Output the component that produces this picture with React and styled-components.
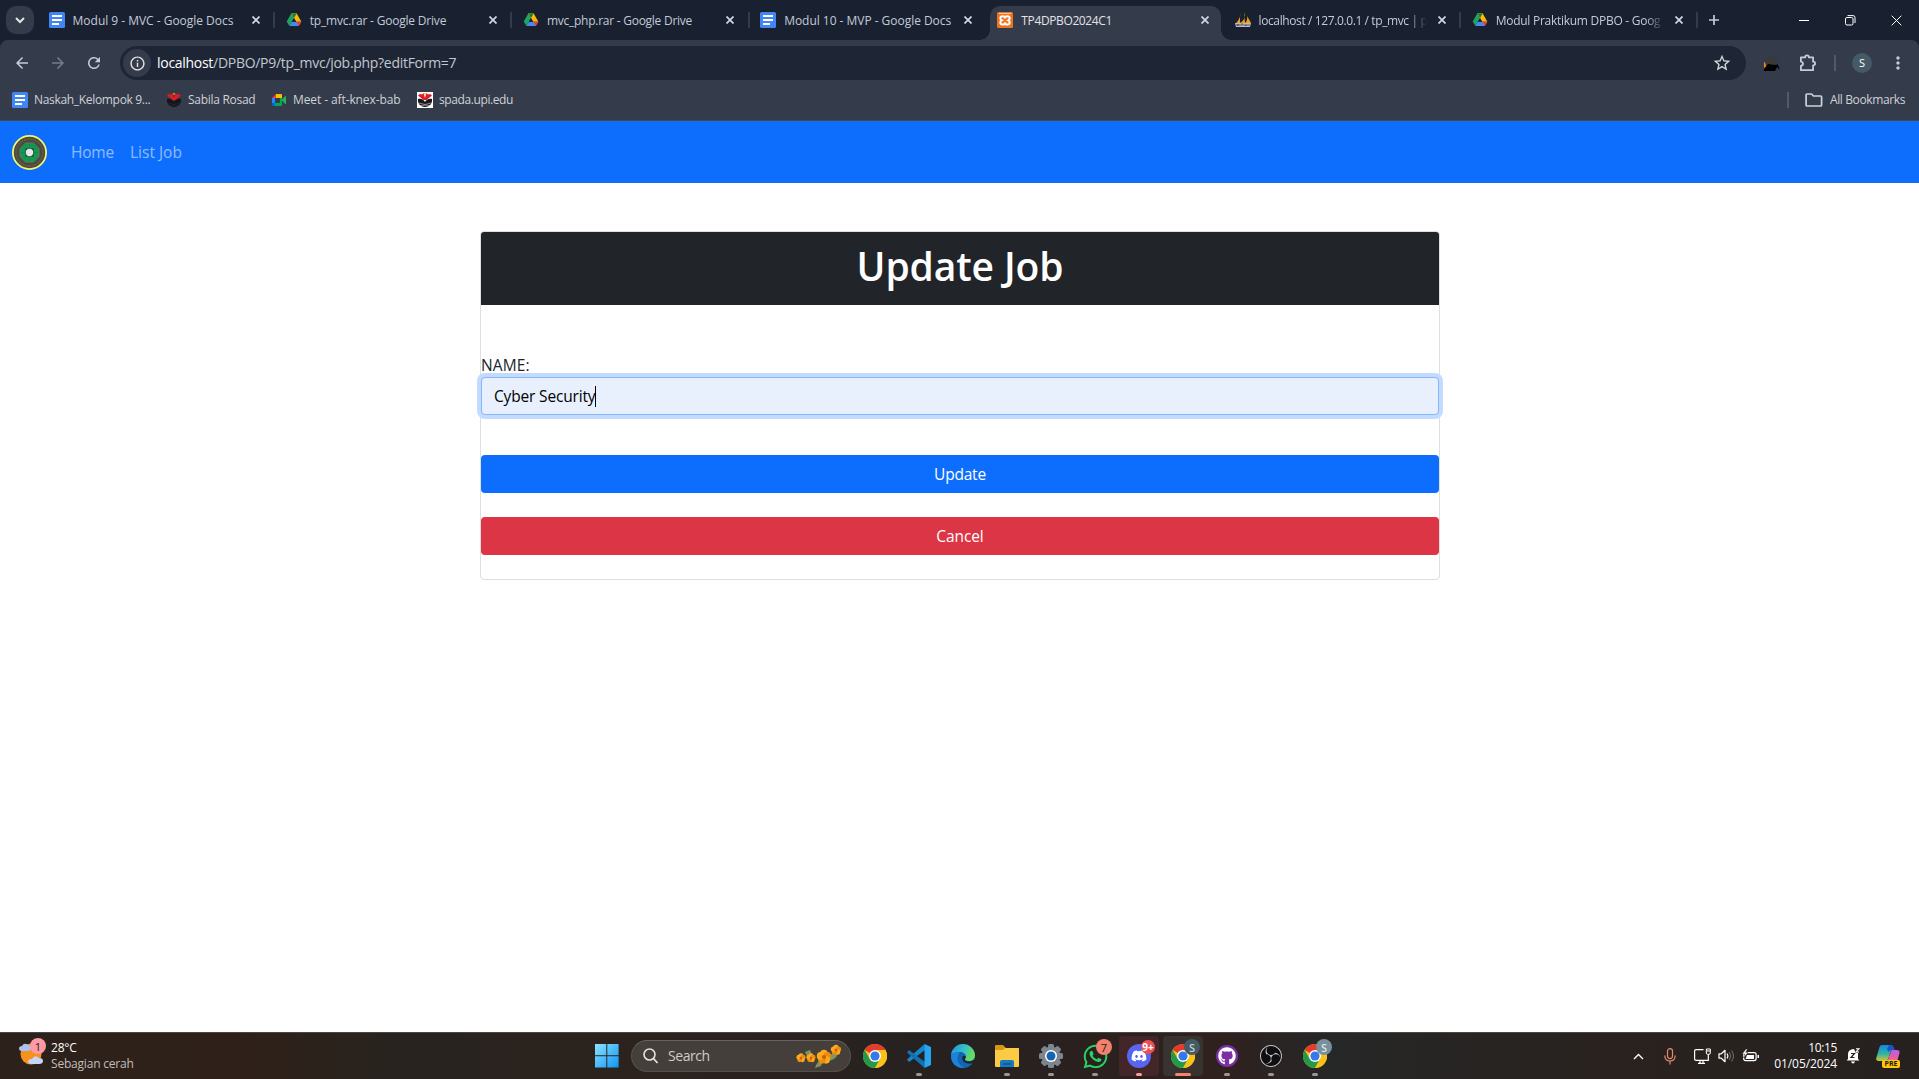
import React from "react";
import styled, { createGlobalStyle, css } from "styled-components";
import { MdArrowBack, MdArrowForward, MdRefresh, MdInfoOutline, MdStarBorder, MdMoreVert } from "react-icons/md";
import { FaWhatsapp, FaDiscord, FaGithub } from "react-icons/fa";
import { SiObsstudio } from "react-icons/si";

const Global = createGlobalStyle`
  *{box-sizing:border-box}
  html,body{margin:0;padding:0;overflow:hidden}
  body{font-family:"Open Sans","Noto Sans",sans-serif;background:#fff;color:#212529}
`;
const Window = styled.div`width:100vw;height:100vh;display:flex;flex-direction:column;overflow:hidden;background:#fff;`;
const Label = styled.span`white-space:nowrap;letter-spacing:${p => p.$ls || 0}px;margin-bottom:${p => (p.$up || 0) * 2}px;`;

/* tab strip */
const TabStrip = styled.header`height:40px;flex:none;display:flex;background:#192130;padding-left:6px;`;
const TabSearch = styled.button`width:28px;height:28px;margin:6px 4px 0 0;flex:none;border:0;border-radius:10px;background:#343c4c;display:grid;place-items:center;padding:0;`;
const Tab = styled.div`
  position:relative;width:237.2px;flex:none;display:flex;align-items:center;padding:2px 0 0 10.6px;height:40px;color:#c3cad9;font-size:12px;
  ${p => p.$sep && css`&::after{content:"";position:absolute;right:0;top:12px;width:2px;height:16px;background:#343c4c;}`}
  ${p => p.$active && css`color:#e3e3e6;z-index:1;
    &::before{content:"";position:absolute;z-index:-1;left:-7px;right:-7px;top:6px;bottom:0;
      background:
       radial-gradient(circle at 0 0,transparent 9.5px,#343c4c 10px) left bottom/10px 10px no-repeat,
       radial-gradient(circle at 10px 0,transparent 9.5px,#343c4c 10px) right bottom/10px 10px no-repeat;}
  `}
`;
const ActiveFill = styled.i`position:absolute;z-index:-1;left:3px;right:3px;top:6px;bottom:0;background:#343c4c;border-radius:10px 10px 0 0;`;
const TabIcon = styled.span`width:16px;height:16px;flex:none;margin:-2px 8px 0 0;display:flex;`;
const TabTitle = styled.span`width:169px;height:20px;line-height:20px;white-space:nowrap;flex:none;
  ${p => p.$fade && css`mask-image:linear-gradient(90deg,#000 150px,transparent 168px);`}`;
const TabClose = styled.span`width:16px;height:16px;display:grid;place-items:center;margin:-2px 0 0 6.4px;`;
const NewTab = styled.span`width:32px;display:grid;place-items:center;`;
const Controls = styled.div`display:flex;margin-left:auto;align-items:center;`;
const Control = styled.span`width:46px;display:grid;place-items:center;`;

/* toolbar */
const ToolbarShell = styled.div`background:#192130;flex:none;`;
const Toolbar = styled.div`height:46px;display:flex;align-items:center;background:#343c4c;border-radius:8px 8px 0 0;color:#c7cbd6;padding:0 3px 0 4px;`;
const ToolButton = styled.span`width:${p => p.$w || 36}px;flex:none;display:grid;place-items:center;font-size:${p => p.$s || 18}px;opacity:${p => p.$dim ? .45 : 1};`;
const Omnibox = styled.div`height:34px;width:1626px;flex:none;border-radius:17px;background:#1e2636;display:flex;align-items:center;padding:0 14px 0 3px;margin-left:8px;font-size:14px;color:#c3c7cf;`;
const InfoChip = styled.span`width:28px;height:28px;border-radius:50%;background:#343c4c;display:grid;place-items:center;color:#e3e3e6;font-size:17px;margin-right:6px;`;
const Host = styled.b`font-weight:400;color:#fff;`;
const StarSlot = styled.span`margin-left:auto;display:flex;font-size:20px;color:#d5d7dd;`;
const Divider = styled.i`width:2px;height:16px;background:#525a6a;flex:none;`;
const Avatar = styled.span`width:20px;height:20px;border-radius:50%;background:#455a64;color:#fff;font-size:11px;display:grid;place-items:center;line-height:20px;`;
const Bookmarks = styled.div`height:35px;flex:none;background:#343c4c;border-bottom:1px solid #4a4746;display:flex;align-items:center;padding:0 14px 6px 12px;font-size:12px;color:#cfd1d6;`;
const Bookmark = styled.span`width:${p => p.$w}px;display:flex;align-items:center;gap:6px;flex:none;`;
const AllBookmarks = styled.span`margin-left:auto;display:flex;align-items:center;`;
const FolderSlot = styled.span`width:41px;padding-left:9px;display:grid;place-items:center;`;

/* page */
const Navbar = styled.nav`height:62px;flex:none;background:#0d6efd;display:flex;align-items:center;padding:1px 0 0 12px;`;
const NavLink = styled.a`color:rgba(255,255,255,.55);font-size:15.5px;margin:0 0 1px ${p => p.$ml}px;line-height:24px;`;
const Page = styled.main`flex:1;padding:48px 479px 0 480px;`;
const Card = styled.section`border:1px solid #dfdfdf;border-radius:4px;height:349px;display:flex;flex-direction:column;`;
const CardHead = styled.h1`margin:0;height:73px;flex:none;background:#212529;color:#fff;border-radius:3px 3px 0 0;font-size:39px;font-weight:600;line-height:67px;text-align:center;`;
const FieldLabel = styled.label`margin-top:48px;height:24px;line-height:24px;font-size:15.5px;`;
const Field = styled.div`height:38px;border:1px solid #86b7fe;border-radius:4px;background:#e8f0fe;box-shadow:0 0 0 4px #c3dbff;display:flex;align-items:center;padding:0 12px;font-size:15.5px;color:#000;flex:none;`;
const Caret = styled.i`width:1px;height:21px;background:#000;`;
const Button = styled.button`height:38px;flex:none;border:0;border-radius:4px;background:${p => p.$bg};margin-top:${p => p.$mt}px;color:#fff;font:400 15.5px "Open Sans",sans-serif;padding:0;`;

/* taskbar */
const Taskbar = styled.footer`height:47px;flex:none;border-top:1px solid #4a4645;display:flex;align-items:stretch;color:#fff;
 background:linear-gradient(90deg,#2c211b 0,#2f2119 240px,#28231f 400px,#2c231e 620px,#262120 960px,#2f211e 1220px,#262727 1330px,#29221f 1600px,#26211f 100%);`;
const Weather = styled.div`position:relative;width:577px;display:flex;padding:5px 0 0 18px;gap:7px;font-size:12px;line-height:16px;`;
const WeatherIcon = styled.span`padding-top:4px;`;
const WeatherText = styled.div`display:flex;flex-direction:column;align-items:flex-start;padding-top:2px;color:#fff;span+span{color:#c3beba}`;
const StartSlot = styled.span`width:54px;display:grid;place-items:center;padding-left:5px;`;
const Search = styled.div`width:220px;height:32px;margin:7px 2px 0 0;border-radius:16px;background:#453f3c;border:1px solid #56504d;border-top-color:#69625f;display:flex;align-items:center;font-size:14px;color:#cfcbc9;padding:0 8px 0 11px;`;
const SearchText = styled.span`margin:0 auto 0 9px;line-height:20px;`;
const TaskApp = styled.span`position:relative;width:40px;height:40px;margin:3px 2px 0;border-radius:4px;display:grid;place-items:center;background:${p => p.$bg || "transparent"};
 &::after{content:"";position:absolute;bottom:0;left:50%;transform:translateX(-50%);height:3px;border-radius:2px;width:${p => p.$bar || 0}px;background:${p => p.$barColor || "#9a9796"};}`;
const Badge = styled.b`position:absolute;right:${p => p.$r ?? 3}px;top:${p => p.$t ?? 3}px;width:${p => p.$s || 16}px;height:${p => p.$s || 16}px;border-radius:50%;background:${p => p.$bg};color:${p => p.$c};font-size:${p => p.$f || 11}px;font-weight:${p => p.$fw || 600};display:grid;place-items:center;line-height:1;`;
const WeatherBadge = styled(Badge)`left:30px;right:auto;top:5px;`;
const Disc = styled.span`width:${p => p.$s || 24}px;height:${p => p.$s || 24}px;border-radius:50%;background:${p => p.$bg};display:grid;place-items:center;color:${p => p.$c || "#fff"};font-size:${p => p.$f}px;`;
const Tray = styled.div`margin-left:auto;display:flex;align-items:center;padding-right:11px;`;
const TraySlot = styled.span`width:${p => p.$w}px;display:grid;place-items:center;`;
const Clock = styled.div`width:71px;display:flex;flex-direction:column;align-items:flex-end;font-size:12px;line-height:16px;`;
const CopilotMark = styled.span`position:relative;width:24px;height:24px;display:block;`;
const PreTag = styled.b`position:absolute;left:6px;bottom:0;width:18px;height:8px;border-radius:2px;background:#ffc50f;color:#231a05;font:700 7px/8px "Open Sans",sans-serif;text-align:center;`;

const Docs = () => <svg width="16" height="16"><rect width="16" height="16" rx="1.5" fill="#4285f4" /><path d="M3 4h10M3 8h10M3 12h7" stroke="#fff" strokeWidth="2" /></svg>;
const Drive = () => <svg width="16" height="16" viewBox="0 0 16 16"><path d="M5.300 1.400h5.400L3.400 14 .7 9.400z" fill="#1ea362" /><path d="M10.700 1.400 15.400 9.800h-5.200L5.300 1.400z" fill="#ffba00" /><path d="M5.300 1.400h5.400L8 6.100z" fill="#188038" /><path d="M3.300 14 6 9.700h9.300L12.700 14z" fill="#4688f4" /><path d="M10.200 9.800h5.200L12.800 14z" fill="#ea4335" /><path d="M8 6.200 10 9.700H6z" fill="#192130" /></svg>;
const Xampp = () => <svg width="16" height="16" viewBox="0 0 16 16"><rect width="16" height="16" rx="1.500" fill="#ee7420" /><path d="M2 1.500h12" stroke="#ffc59c" /><path d="M8 6.500Q8 4.200 5.700 4.200 3.300 4.200 3.300 6.200q0 1.300 1.500 2.100-1.500.8-1.500 2.200 0 2 2.400 2Q8 12.500 8 10.200M8 6.500Q8 4.200 10.300 4.200q2.400 0 2.400 2 0 1.300-1.500 2.100 1.500.8 1.500 2.200 0 2-2.400 2Q8 12.500 8 10.200" fill="none" stroke="#fff" strokeWidth="2" /></svg>;
const Sails = () => <svg width="16" height="16" viewBox="0 0 16 16"><path d="M5 1Q6 6 1 11h4zM9 0q3 7-4 11h5zM12 4q3 5 4 7h-6q3-3 2-7z" fill="#f89c0e" /><path d="M0 11h16l-1 4H1z" fill="#b7bbca" /><path d="M2 14v-2l1 2 1-2v2M6 14v-2h2v2M10 12v2l1-1 1 1v-2M14 12v2" stroke="#41475a" fill="none" strokeWidth=".8" /></svg>;
const Upi = ({ white }) => <svg width="16" height="16" viewBox="0 0 16 16">{white && <path d="M0 0h16v16H0z" fill="#fff" />}<path d="M1 3.500 3 2l2 .6L6.500 1 8 6l1.500-5L11 2.600 13 2l2 1.500L9.500 8h-3z" fill="#e01b22" /><path d="M1 7c3-1 6 1 7 3 1-2 4-4 7-3 .5 4-2 8-7 8S.5 11 1 7z" fill="#15151a" /><path d="m2 11 6 1.500 6-1.500M3 13.500l5-.3 5 .3" stroke={white ? "#fff" : "#2c2c34"} fill="none" strokeWidth=".5" /><circle cx="8" cy="1.800" r=".9" fill="#f5c400" /></svg>;
const Meet = () => <svg width="16" height="16" viewBox="0 0 16 16"><path d="M1 6 5 2v4z" fill="#ea4335" /><path d="M5 2h5q1 0 1 1v3H5z" fill="#fbbc04" /><path d="M1 6h3v5H1z" fill="#2684fc" /><path d="M1 11h3v3H2a1 1 0 0 1-1-1z" fill="#0066da" /><path d="M4 11h7v2q0 1-1 1H4z" fill="#00ac47" /><path d="M9 6h2v5H9z" fill="#00ac47" /><path d="m10.500 8 3.800-4q.7-.4.700.5v7q0 .9-.7.500z" fill="#22b455" /></svg>;
const Crest = () => <svg width="35" height="35" viewBox="0 0 35 35"><circle cx="17.500" cy="17.500" r="16.600" fill="#4a4a43" stroke="#f7f36a" strokeWidth="1.800" /><circle cx="17.500" cy="17.500" r="13.400" fill="none" stroke="#6f6632" strokeWidth="1.600" strokeDasharray="1.200 1" /><path d="M13.500 8h8l5.500 5.500v8L21.500 27h-8L8 21.500v-8z" fill="#0e9a4c" stroke="#5e7a63" /><path d="M17.500 9v17M9 17.500h17M12.500 12.500l10 10M22.500 12.500l-10 10" stroke="#3f6b55" strokeWidth=".8" /><path d="M13.500 13.500h8v8h-8z" fill="#26382e" /><circle cx="17.500" cy="17.500" r="3.700" fill="#e4e6ee" /></svg>;
const Ext = () => <svg width="16" height="16" viewBox="0 0 16 16"><path d="M1 6Q2 1.500 8 1.500l2 1.500 5-3-2 6-3 5-8 1z" fill="#393939" /><path d="M0 6.500q2 2 2 5l-2 1.500z" fill="#ff8a00" /><path d="M0 16v-2l4-5 8 1 1.500-1L16 15l-3-3-2 4z" fill="#000" /></svg>;
const Puzzle = () => <svg width="18" height="18" viewBox="0 0 18 18"><path d="M1.900 3.400H6.200Q6 1.300 8 1.300t1.800 2.100h4.300V7.700q2 0 2 1.800t-2 1.800v4.900H1.900V12Q4 11.600 4 9.800T1.900 7.600z" fill="none" stroke="#c3cbe0" strokeWidth="1.800" strokeLinejoin="round" /></svg>;
const FolderLine = () => <svg width="18" height="14" viewBox="0 0 18 14"><path d="M1.100 12V2q0-1 1-1h4.500l1.800 2h7.200q1 0 1 1v8q0 1-1 1H2.100q-1 0-1-1z" fill="none" stroke="#cfd2dc" strokeWidth="1.700" /></svg>;
const X = ({ s = 8, c = "#d3d7e2", w = 1.700 }) => <svg width={s} height={s} viewBox="0 0 8 8"><path d="M.5.5l7 7M7.500.5l-7 7" stroke={c} strokeWidth={w * 8 / s} /></svg>;
const Chrome = () => <svg width="24" height="24" viewBox="0 0 24 24"><circle cx="12" cy="12" r="12" fill="#fbc116" /><path d="M12 12 1.600 6A12 12 0 0 1 22.400 6H12z" fill="#e33b2e" /><path d="M1.600 6A12 12 0 0 0 12 24l5.200-9H6.800z" fill="#229a49" /><path d="M12 6h10.400A12 12 0 0 1 12 24l5.200-9z" fill="#fbc116" /><circle cx="12" cy="12" r="6" fill="#fff" /><circle cx="12" cy="12" r="4.600" fill="#3478ea" /></svg>;
const Code = () => <svg width="24" height="24" viewBox="0 0 24 24"><path d="M17.500 0 0 15.500 2 18 18 6z" fill="#1587cf" /><path d="M17.500 24 0 8.500 2 6l16 12z" fill="#1072b5" /><path d="m17.500 0 6.500 3v18l-6.500 3z" fill="#27a5f0" /></svg>;
const Edge = () => <svg width="24" height="24" viewBox="0 0 24 24"><defs><linearGradient id="eg" x1="0" y1="0" x2="1" y2=".3"><stop offset="0" stopColor="#2390dc" /><stop offset=".6" stopColor="#35c1c9" /><stop offset="1" stopColor="#68dd58" /></linearGradient></defs><circle cx="12" cy="12" r="12" fill="#1265b5" /><path d="M.1 11A12 12 0 0 1 24 11c.2 4-3 6-6 6-3.500 0-5-1-3.500-3C16 11 13 8 9 8c-5 0-8 2-8.900 3z" fill="url(#eg)" /><path d="M9 9c-4 3-3.500 12 5 14.600C7 25-.5 20 .1 11 2 8.500 6 7.600 9 9z" fill="#1b83d8" /><path d="M14.500 14c-1.500 2 0 3.500 3.500 3.500 2 0 4-.8 5.300-2l.7 2-1.500 1.500C16 21 10 18 11.500 12.500c1.500-1.500 4-.5 3 1.500z" fill="#262120" /></svg>;
const Folder = () => <svg width="24" height="22" viewBox="0 0 24 22"><path d="M0 1q0-1 1-1h7l3 3h12q1 0 1 1v5H0z" fill="#d9970f" /><path d="M0 5h8l2-2h13q1 0 1 1v17q0 1-1 1H1q-1 0-1-1z" fill="#fccb45" /><path d="M5 22v-5q0-2 2-2h10q2 0 2 2v5z" fill="#1679c4" /><path d="M8 19h8" stroke="#0b5693" strokeWidth="1.500" /></svg>;
const Flowers = () => <svg width="46" height="26" viewBox="0 0 46 26"><path d="M19 25q2-8 8-7l-2 5zM32 18q9-1 10-9-8 0-10 9zM9 9l5-2 2 5-5 1z" fill="#7d9560" />{[[5, 15, 4.500], [15, 15, 4.500], [28, 14, 7], [40, 7, 5]].map(([x, y, r], i) => <g key={i}>{[0, 72, 144, 216, 288].map(a => <circle key={a} cx={x + Math.sin(a / 57.3) * r * .5} cy={y - Math.cos(a / 57.3) * r * .5} r={r * .55} fill={a % 144 ? "#ee8a0e" : "#fbab20"} />)}<circle cx={x} cy={y} r={r * .3} fill="#cf5c06" /></g>)}</svg>;
const Sun = () => <svg width="26" height="24" viewBox="0 0 26 24"><circle cx="13" cy="12" r="10.500" fill="#f5921e" /><path d="M4 9Q1 9 1 6.500T4 4q2-4 6-1 3 0 3 3T10 9z" fill="#a9c1f2" /><path d="M14 22q-4 0-4-2.500t4-2.500q3-5 7-1 4 0 4 3t-4 3z" fill="#c4d7fa" /></svg>;
const Windows = () => <svg width="24" height="24"><defs><linearGradient id="wg" x1="0" y1="0" x2="24" y2="24" gradientUnits="userSpaceOnUse"><stop stopColor="#8be3ff" /><stop offset="1" stopColor="#0b93f5" /></linearGradient></defs><path d="M0 0h11.300v11.300H0zM12.300 0h11.300v11.300H12.300zM0 12.300h11.300v11.300H0zM12.300 12.300h11.300v11.300H12.300z" fill="url(#wg)" /></svg>;
const Gear = () => <svg width="24" height="24" viewBox="0 0 24 24"><g fill="#7d868f">{[0, 45, 90, 135].map(a => <rect key={a} x="9" y="0" width="6" height="24" rx="1.500" transform={`rotate(${a} 12 12)`} />)}<circle cx="12" cy="12" r="9.500" /></g><circle cx="12" cy="12" r="6" fill="#fff" /><circle cx="12" cy="12" r="4.500" fill="#1464ae" /></svg>;
const Mic = () => <svg width="12" height="17" viewBox="0 0 12 17"><rect x="3.500" y=".6" width="5" height="10" rx="2.500" fill="none" stroke="#e58a6e" strokeWidth="1.200" /><path d="M.8 7.500Q.8 13 6 13t5.200-5.500M6 13v3.500" fill="none" stroke="#e58a6e" strokeWidth="1.200" /></svg>;
const Network = () => <svg width="17" height="16" viewBox="0 0 17 16"><path d="M9.500 1.600H2q-1.400 0-1.400 1.400v8q0 1.400 1.400 1.400h12.300V6.500M4 15.400h7M6 12.500V15M9 12.500V15" fill="none" stroke="#fff" strokeWidth="1.200" /><path d="M12.300 1h4V5q0 1.300-1.300 1.300h-1.400q-1.300 0-1.300-1.300zM12.300 3h4" fill="none" stroke="#fff" /></svg>;
const Speaker = () => <svg width="17" height="14" viewBox="0 0 17 14"><path d="M1 4.800h2.300L7 1.300v11.400L3.300 9.200H1z" fill="none" stroke="#fff" strokeWidth="1.200" strokeLinejoin="round" /><path d="M9 4.500q1.800 2.500 0 5" fill="none" stroke="#fff" strokeWidth="1.100" /><path d="M11.300 3q3 4 0 8M13.500 1.500q4 5.500 0 11" fill="none" stroke="#77716e" /></svg>;
const Battery = () => <svg width="17" height="14" viewBox="0 0 17 14"><rect x="1.600" y="3.600" width="12.500" height="8" rx="2" fill="none" stroke="#fff" strokeWidth="1.200" /><path d="M5 6h7v4H3.500zM15.500 6h1.500v3h-1.500z" fill="#fff" /><path d="M4 0 0 5h2.500L1.500 9 6 3.500H3.800L5.500 0z" fill="#fff" stroke="#29221f" strokeWidth=".5" /></svg>;
const Bell = () => <svg width="14" height="16" viewBox="0 0 14 16"><path d="M2 11V6q0-4 5-5 4 .5 5 3v7l1.500 1.500H.5zM5 13.500h4q-.5 2-2 2t-2-2z" fill="#fff" /><path d="M5 5.500h3.500L5 9.500h3.500" fill="none" stroke="#29221f" strokeWidth="1.200" /><path d="M8 0h6v5H9.500z" fill="#29221f" /><path d="M10 .7h3L10 4h3" fill="none" stroke="#fff" strokeWidth="1.100" /></svg>;
const Copilot = () => <CopilotMark><svg width="24" height="24" viewBox="0 0 24 24"><defs><linearGradient id="ca" x1="0" y1="0" x2="0" y2="1"><stop stopColor="#1484e8" /><stop offset=".55" stopColor="#2fb5a0" /><stop offset="1" stopColor="#d6c52b" /></linearGradient><linearGradient id="cb" x1="0" y1="0" x2="0" y2="1"><stop stopColor="#b55cf0" /><stop offset=".6" stopColor="#f0618f" /><stop offset="1" stopColor="#fb9a5b" /></linearGradient></defs><path d="M6 1h9q2 0 1 2.500L12.500 14q-1 3-3.500 3H3q-3.500 0-2.700-3L3.500 3Q4 1 6 1z" fill="url(#ca)" /><path d="M13 1h2q2 0 2.700 2l1 3h-3q-2.500 0-3.200 2L11 5z" fill="#1a55c4" /><path d="M15.500 6H21q3 0 2.500 3L21 18q-.8 3-3.500 3H10z" fill="url(#cb)" /></svg><PreTag>PRE</PreTag></CopilotMark>;

const tabs = [
  { title: "Modul 9 - MVC - Google Docs", icon: <Docs />, sep: true, ls: -.02 },
  { title: "tp_mvc.rar - Google Drive", icon: <Drive />, sep: true, ls: -.2 },
  { title: "mvc_php.rar - Google Drive", icon: <Drive />, sep: true, ls: -.26 },
  { title: "Modul 10 - MVP - Google Docs", icon: <Docs />, ls: -.03 },
  { title: "TP4DPBO2024C1", icon: <Xampp />, active: true, ls: -.38 },
  { title: "localhost / 127.0.0.1 / tp_mvc | p", icon: <Sails />, sep: true, fade: true, ls: -.39 },
  { title: "Modul Praktikum DPBO - Goog", icon: <Drive />, sep: true, fade: true, ls: -.27 },
];

const bookmarks = [
  { name: "Naskah_Kelompok 9...", icon: <Docs />, w: 154, ls: -.32 },
  { name: "Sabila Rosad", icon: <Upi />, w: 105, ls: -.28 },
  { name: "Meet - aft-knex-bab", icon: <Meet />, w: 146, ls: -.1 },
  { name: "spada.upi.edu", icon: <Upi white />, w: 110, ls: -.4 },
];

export default function App() {
  return <Window><Global />
    <TabStrip>
      <TabSearch><svg width="10" height="7"><path d="m1 1 4 4 4-4" fill="none" stroke="#e3e3e6" strokeWidth="2" /></svg></TabSearch>
      {tabs.map(t => <Tab key={t.title} $sep={t.sep} $active={t.active}>
        {t.active && <ActiveFill />}
        <TabIcon>{t.icon}</TabIcon>
        <TabTitle $fade={t.fade}><Label $ls={t.ls}>{t.title}</Label></TabTitle>
        <TabClose><X /></TabClose>
      </Tab>)}
      <NewTab><svg width="10" height="10"><path d="M5 0v10M0 5h10" stroke="#c3cad9" strokeWidth="1.700" /></svg></NewTab>
      <Controls>
        <Control><svg width="10" height="10"><path d="M0 5.500h10" stroke="#fff" /></svg></Control>
        <Control><svg width="11" height="11"><rect x=".5" y="2.500" width="7.500" height="7.500" rx="1.500" fill="none" stroke="#fff" /><path d="M2.500.6H8q2 0 2 2V8" fill="none" stroke="#fff" /></svg></Control>
        <Control><X s={11} c="#fff" w={1} /></Control>
      </Controls>
    </TabStrip>
    <ToolbarShell><Toolbar>
      <ToolButton><MdArrowBack /></ToolButton>
      <ToolButton $dim><MdArrowForward /></ToolButton>
      <ToolButton><MdRefresh /></ToolButton>
      <Omnibox>
        <InfoChip><MdInfoOutline /></InfoChip>
        <Label $ls={-.29} $up={1}><Host>localhost</Host>/DPBO/P9/tp_mvc/job.php?editForm=7</Label>
        <StarSlot><MdStarBorder /></StarSlot>
      </Omnibox>
      <ToolButton $w={52}><Ext /></ToolButton>
      <ToolButton $w={20}><Puzzle /></ToolButton>
      <ToolButton $w={34}><Divider /></ToolButton>
      <ToolButton $w={20}><Avatar>S</Avatar></ToolButton>
      <ToolButton $w={52} $s={20}><MdMoreVert /></ToolButton>
    </Toolbar></ToolbarShell>
    <Bookmarks>
      {bookmarks.map(b => <Bookmark key={b.name} $w={b.w}>{b.icon}<Label $ls={b.ls} $up={1}>{b.name}</Label></Bookmark>)}
      <AllBookmarks><Divider /><FolderSlot><FolderLine /></FolderSlot><Label $ls={-.38} $up={1}>All Bookmarks</Label></AllBookmarks>
    </Bookmarks>
    <Navbar>
      <Crest />
      <NavLink $ml={24}><Label $ls={-.2}>Home</Label></NavLink>
      <NavLink $ml={16}><Label>List Job</Label></NavLink>
    </Navbar>
    <Page>
      <Card>
        <CardHead><Label $ls={-.1}>Update Job</Label></CardHead>
        <FieldLabel><Label $ls={.1}>NAME:</Label></FieldLabel>
        <Field><Label $ls={-.17}>Cyber Security</Label><Caret /></Field>
        <Button $bg="#0d6efd" $mt={40}><Label $ls={-.2}>Update</Label></Button>
        <Button $bg="#dc3545" $mt={24}><Label $ls={-.1}>Cancel</Label></Button>
      </Card>
    </Page>
    <Taskbar>
      <Weather>
        <WeatherIcon><Sun /></WeatherIcon>
        <WeatherBadge $bg="#ff99a4" $c="#222" $fw={400}>1</WeatherBadge>
        <WeatherText><Label $ls={-.2}>28°C</Label><Label $ls={-.2}>Sebagian cerah</Label></WeatherText>
      </Weather>
      <StartSlot><Windows /></StartSlot>
      <Search>
        <svg width="16" height="16"><circle cx="6.500" cy="6.500" r="5.500" fill="none" stroke="#e3e0de" strokeWidth="1.600" /><path d="m10.500 10.500 4 4.500" stroke="#e3e0de" strokeWidth="1.800" /></svg>
        <SearchText><Label $ls={-.45}>Search</Label></SearchText>
        <Flowers />
      </Search>
      <TaskApp><Chrome /></TaskApp>
      <TaskApp $bar={6}><Code /></TaskApp>
      <TaskApp><Edge /></TaskApp>
      <TaskApp $bar={6}><Folder /></TaskApp>
      <TaskApp $bar={6}><Gear /></TaskApp>
      <TaskApp $bar={6}><FaWhatsapp color="#25d366" size={27} /><Badge $bg="#f2806b" $c="#222" $fw={400}>7</Badge></TaskApp>
      <TaskApp $bg="#432728" $bar={6} $barColor="#ff99a4"><Disc $bg="#5865f2" $f={16}><FaDiscord /></Disc><Badge $bg="#ed4f52" $c="#fff" $f={10} $s={14} $r={4} $t={4} $fw={700}>9+</Badge></TaskApp>
      <TaskApp $bg="#383231" $bar={16} $barColor="#f5846b"><Chrome /><Badge $bg="#455a64" $c="#c8d0d4">S</Badge></TaskApp>
      <TaskApp $bar={6}><Disc $s={22} $bg="#7b2fa5" $f={18}><FaGithub /></Disc></TaskApp>
      <TaskApp $bar={6}><Disc $s={22} $bg="#0f0f12" $c="#c6c4c6" $f={22}><SiObsstudio /></Disc></TaskApp>
      <TaskApp $bar={6}><Chrome /><Badge $bg="#78909c" $c="#dde4e8">S</Badge></TaskApp>
      <Tray>
        <TraySlot $w={32}><svg width="11" height="7"><path d="m1 6 4.500-4.500L10 6" fill="none" stroke="#fff" strokeWidth="1.400" /></svg></TraySlot>
        <TraySlot $w={32}><Mic /></TraySlot>
        <TraySlot $w={32}><Network /></TraySlot>
        <TraySlot $w={16}><Speaker /></TraySlot>
        <TraySlot $w={32}><Battery /></TraySlot>
        <Clock><Label $ls={-.35}>10:15</Label><Label $ls={-.1}>01/05/2024</Label></Clock>
        <TraySlot $w={31}><Bell /></TraySlot>
        <TraySlot $w={40}><Copilot /></TraySlot>
      </Tray>
    </Taskbar>
  </Window>;
}
